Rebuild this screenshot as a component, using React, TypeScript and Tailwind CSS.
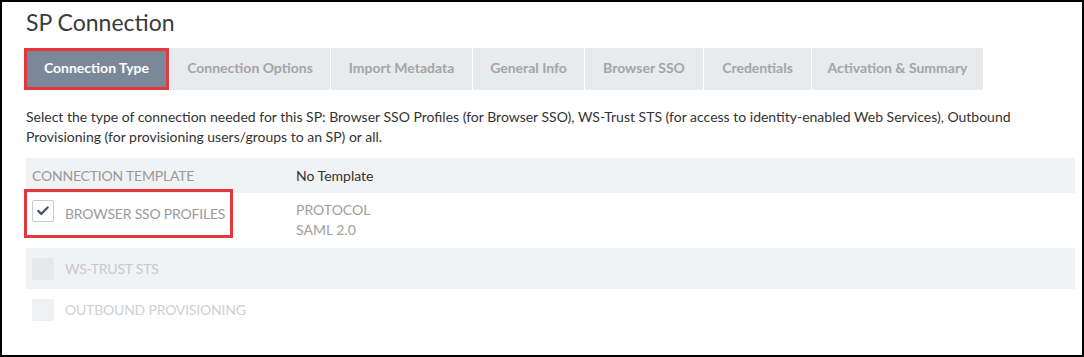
import { Check } from 'lucide-react';

const tabs = [
  { label: 'Connection Type', w: 'w-[145px]' },
  { label: 'Connection Options', w: 'w-[161px]' },
  { label: 'Import Metadata', w: 'w-[142px]' },
  { label: 'General Info', w: 'w-[112px]' },
  { label: 'Browser SSO', w: 'w-[119px]' },
  { label: 'Credentials', w: 'w-[108px]' },
  { label: 'Activation & Summary', w: 'w-[172px]' },
];

function Checkbox({ checked, tone }: { checked?: boolean; tone: 'on' | 'dim' | 'off' }) {
  if (tone === 'on') {
    return (
      <div className="flex h-[22px] w-[22px] shrink-0 items-center justify-center rounded-[2px] border border-[#c9ccd0] bg-white">
        {checked && <Check size={14} strokeWidth={4} className="text-[#4a5666]" />}
      </div>
    );
  }
  return (
    <div
      className={
        tone === 'dim'
          ? 'h-[22px] w-[22px] shrink-0 rounded-[2px] bg-[#e6e8ea]'
          : 'h-[22px] w-[22px] shrink-0 rounded-[2px] bg-[#eff0f1]'
      }
    />
  );
}

export default function App() {
  return (
    <div className="h-[357px] w-[1084px] border-2 border-black bg-white font-['Lato',sans-serif] text-[#333]">
      <div className="px-6 pt-[6px]">
        <h1 className="text-[23px] leading-[28px] text-[#3a3a3a]">SP Connection</h1>

        {/* Wizard tabs */}
        <div className="mt-[12px] flex h-[42px] -ml-[2px]">
          {tabs.map((t, i) =>
            i === 0 ? (
              <div
                key={t.label}
                className={`${t.w} flex items-center justify-center border-[3px] border-[#e4383d] bg-[#7a8899] pb-[3px] text-[14px] font-bold text-white`}
              >
                {t.label}
              </div>
            ) : (
              <div
                key={t.label}
                className={`${t.w} flex items-center justify-center border-l border-white bg-[#e9eaeb] pb-[3px] text-[14px] font-bold text-[#a3a5a8]`}
              >
                {t.label}
              </div>
            )
          )}
        </div>

        <p className="mt-[17px] text-[14px] leading-[20px] text-[#333]">
          Select the type of connection needed for this SP: Browser SSO Profiles (for Browser SSO), WS-Trust STS
          (for access to identity-enabled Web Services), Outbound Provisioning (for provisioning users/groups to
          an SP) or all.
        </p>

        {/* Connection template table */}
        <div className="mt-[11px] w-[1049px] text-[14px]">
          <div className="flex h-[35px] items-center bg-[#f1f2f3] px-[6px]">
            <div className="w-[264px] uppercase tracking-[-0.2px] text-[#999]">Connection Template</div>
            <div className="text-[#333]">No Template</div>
          </div>

          <div className="flex h-[55px] items-start">
            <div className="w-[270px]">
              <div className="relative -ml-[2px] -mt-[4px] flex h-[49px] w-[209px] items-center gap-[11px] border-[3px] border-[#e4383d] pl-[5px]">
                <div className="-mt-[6px]">
                  <Checkbox checked tone="on" />
                </div>
                <span className="uppercase tracking-[-0.2px] text-[#9a9a9a]">Browser SSO Profiles</span>
              </div>
            </div>
            <div className="pt-[7px] leading-[20px] text-[#a0a0a0]">
              <div>PROTOCOL</div>
              <div>SAML 2.0</div>
            </div>
          </div>

          <div className="flex h-[41px] items-center gap-[11px] bg-[#f1f2f3] px-[6px]">
            <Checkbox tone="dim" />
            <span className="uppercase tracking-[-0.2px] text-[#c8c9cb]">WS-Trust STS</span>
          </div>

          <div className="flex h-[41px] items-center gap-[11px] px-[6px]">
            <Checkbox tone="off" />
            <span className="uppercase tracking-[-0.2px] text-[#cfd0d2]">Outbound Provisioning</span>
          </div>
        </div>
      </div>
    </div>
  );
}
